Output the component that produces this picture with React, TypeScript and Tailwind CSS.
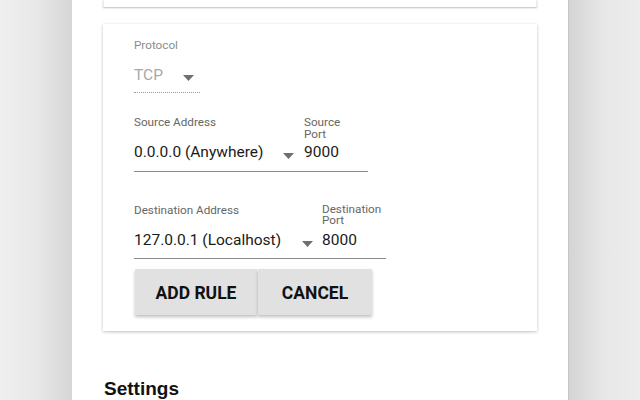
import React from "react";

function Arrow({ className = "" }: { className?: string }) {
  return (
    <svg width="11" height="6" viewBox="0 0 11 6" className={className}>
      <path d="M0 0 L11 0 L5.5 6 Z" fill="#6f6f6f" />
    </svg>
  );
}

export default function App() {
  return (
    <div
      className="w-[640px] h-[400px] overflow-hidden flex bg-[#ececec]"
      style={{ fontFamily: "Roboto, 'Liberation Sans', sans-serif" }}
    >
      <div className="w-[72px] h-full bg-gradient-to-r from-[#efefef] via-[#e8e8e8] to-[#d6d6d6]" />
      <div className="w-[496px] h-full bg-white pl-[31px] pr-[31px] flex flex-col">
        {/* top card bottom edge */}
        <div className="h-[7px] w-[434px] bg-white border-x border-[#ececec] shadow-[0_1px_2px_rgba(0,0,0,0.25)]" />
        {/* main card */}
        <div className="mt-[17px] w-[434px] h-[308px] bg-white shadow-[0_1px_3px_rgba(0,0,0,0.25)] pl-[31px] pt-[15px] flex flex-col">
          {/* protocol */}
          <div className="text-[11.7px] leading-[13px] text-[#8c8c8c]">Protocol</div>
          <div className="mt-[13px] w-[66px] h-[28px] border-b border-dotted border-[#9a9a9a] flex items-start justify-between pr-[6px]">
            <span className="text-[15.5px] leading-[20px] text-[#a8a8a8]">TCP</span>
            <Arrow className="mt-[10px]" />
          </div>

          {/* source */}
          <div className="mt-[23px] flex items-start">
            <div className="w-[170px] flex flex-col border-b border-[#8a8a8a]">
              <div className="h-[26px] text-[11.7px] leading-[12px] text-[#666]">Source Address</div>
              <div className="h-[29px] flex items-start justify-between pr-[10px]">
                <span className="text-[15.5px] leading-[20px] text-[#1a1a1a]">0.0.0.0 (Anywhere)</span>
                <Arrow className="mt-[11px]" />
              </div>
            </div>
            <div className="w-[64px] flex flex-col border-b border-[#8a8a8a]">
              <div className="h-[26px] text-[11.7px] leading-[12px] text-[#666]">
                Source
                <br />
                Port
              </div>
              <div className="h-[29px] text-[15.5px] leading-[20px] text-[#1a1a1a]">9000</div>
            </div>
          </div>

          {/* destination */}
          <div className="mt-[32px] flex items-start">
            <div className="w-[188px] flex flex-col border-b border-[#8a8a8a]">
              <div className="h-[26px] text-[11.7px] leading-[12px] text-[#666]">Destination Address</div>
              <div className="h-[28px] flex items-start justify-between pr-[9px]">
                <span className="text-[15.5px] leading-[20px] text-[#1a1a1a]">127.0.0.1 (Localhost)</span>
                <Arrow className="mt-[11px]" />
              </div>
            </div>
            <div className="w-[64px] flex flex-col border-b border-[#8a8a8a]">
              <div className="h-[26px] text-[11.7px] leading-[11.5px] text-[#666]">
                Destination
                <br />
                Port
              </div>
              <div className="h-[28px] text-[15.5px] leading-[20px] text-[#1a1a1a]">8000</div>
            </div>
          </div>

          {/* buttons */}
          <div className="mt-[10px] ml-[1px] flex gap-[1px]">
            <button className="w-[122px] h-[46px] pt-[2px] bg-[#e1e1e1] text-[17.5px] font-bold text-[#111] shadow-[0_2px_3px_rgba(0,0,0,0.25)]">
              ADD RULE
            </button>
            <button className="w-[114px] h-[46px] pt-[2px] bg-[#e1e1e1] text-[17.5px] font-bold text-[#111] shadow-[0_2px_3px_rgba(0,0,0,0.25)]">
              CANCEL
            </button>
          </div>
        </div>

        <div
          className="mt-[47px] ml-[1px] text-[19px] leading-[22px] font-bold text-[#111]"
          style={{ fontFamily: "'Liberation Sans', Arial, sans-serif" }}
        >
          Settings
        </div>
      </div>
      <div className="w-[72px] h-full border-l border-[#c4c4c4] bg-gradient-to-r from-[#d4d4d4] via-[#e8e8e8] to-[#ededed]" />
    </div>
  );
}
